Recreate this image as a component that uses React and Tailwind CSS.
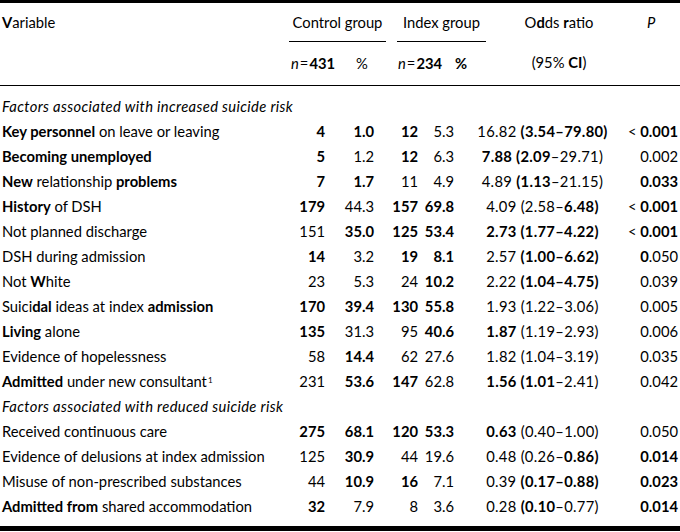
const rows = [
  { section: 'Factors associated with increased suicide risk' },
  { label: '*Key personnel* on leave or leaving', c: ['*4*', '*1.0*', '*12*', '5.3', '16.82 *(3.54–79.80)*', '< *0.001*'] },
  { label: '*Becoming unemployed*', c: ['*5*', '1.2', '*12*', '6.3', '*7.88 (2.09*–29.71)', '0.002'] },
  { label: '*New* relationship *problems*', c: ['*7*', '*1.7*', '11', '4.9', '4.89 *(1.13*–21.15)', '*0.033*'] },
  { label: '*History* of DSH', c: ['*179*', '44.3', '*157*', '*69.8*', '4.09 (2.58–*6.48)*', '< *0.001*'] },
  { label: 'Not planned discharge', c: ['151', '*35.0*', '*125*', '*53.4*', '*2.73 (1.77–4.22)*', '< *0.001*'] },
  { label: 'DSH during admission', c: ['*14*', '3.2', '*19*', '*8.1*', '2.57 *(1.00–6.62)*', '*0*.050'] },
  { label: 'Not *W*hite', c: ['23', '5.3', '24', '*10.2*', '2.22 *(1.04–4.75)*', '0.039'] },
  { label: 'Suici*dal* ideas at index *admission*', c: ['*170*', '*39.4*', '*130*', '*55.8*', '1.93 (1.22–3.06)', '0.005'] },
  { label: '*Living* alone', c: ['*135*', '31.3', '95', '*40.6*', '*1.87* (1.19–2.93)', '0.006'] },
  { label: 'Evidence of hopelessness', c: ['58', '*14.4*', '62', '27.6', '1.82 (1.04–3.19)', '0.035'] },
  { label: '*Admitted* under new consultant', sup: true, c: ['231', '*53.6*', '*147*', '62.8', '*1.56 (1.01*–2.41)', '0.042'] },
  { section: 'Factors associated with reduced suicide risk' },
  { label: 'Received continuous care', c: ['*275*', '*68.1*', '*120*', '*53.3*', '*0.63* (0.40–1.00)', '0.050'] },
  { label: 'Evidence of delusions at index admission', c: ['125', '*30.9*', '44', '19.6', '0.48 (0.26–*0.86)*', '*0.014*'] },
  { label: 'Misuse of non-prescribed substances', c: ['44', '*10.9*', '*16*', '7.1', '0.39 *(0.17–0.88)*', '*0.023*'] },
  { label: '*Admitted from* shared accommodation', c: ['*32*', '7.9', '8', '3.6', '0.28 *(0.10*–0.77)', '*0.014*'] },
]

// "*text*" marks the bold runs; wrapped in one span so spaces survive inside flex cells
function Rich({ text }) {
  return (
    <span>
      {text.split('*').map((part, i) =>
        i % 2 ? <b key={i} className="font-bold">{part}</b> : <span key={i}>{part}</span>
      )}
    </span>
  )
}

const cell = [
  'flex justify-end whitespace-nowrap',
  'flex justify-end whitespace-nowrap',
  'flex justify-end whitespace-nowrap',
  'flex justify-end whitespace-nowrap',
  'flex justify-center whitespace-nowrap tracking-[0.3px]',
  'flex justify-end whitespace-nowrap',
]

export default function App() {
  return (
    <div
      className="w-[680px] h-[532px] bg-white text-black text-[14.75px] overflow-hidden"
      style={{ fontFamily: 'Lato, "Open Sans", sans-serif' }}
    >
      <div className="h-[3px] bg-black" />

      {/* header */}
      <div className="flex border-b border-black">
        <div className="w-[289px] pl-[2px]">
          <div className="h-[38px] flex items-center"><span><b className="font-bold">V</b>ariable</span></div>
        </div>
        <div className="w-[197px]">
          <div className="flex h-[39px]">
            <div className="w-[97px] flex items-center justify-center border-b border-black">Control group</div>
            <div className="w-[11px]" />
            <div className="w-[89px] flex items-center justify-center border-b border-black">Index group</div>
          </div>
          <div className="flex h-[43px] items-center">
            <span className="w-[67px] pl-[2px]"><i>n</i><span className="mx-[1px]">=</span><b className="font-bold">431</b></span>
            <span className="w-[41px]">%</span>
            <span className="w-[58px] pl-[1px]"><i>n</i><span className="mx-[1px]">=</span><b className="font-bold">234</b></span>
            <b className="font-bold">%</b>
          </div>
        </div>
        <div className="w-[146px] flex flex-col items-center">
          <div className="h-[38px] flex items-center">
            <span>O<b className="font-bold">d</b>ds <b className="font-bold">r</b>atio</span>
          </div>
          <div className="h-[44px] flex items-center pb-[2px]">
            <span>(95% <b className="font-bold">CI</b>)</span>
          </div>
        </div>
        <div className="flex-1 pl-[15px]">
          <div className="h-[38px] flex items-center"><i>P</i></div>
        </div>
      </div>

      {/* body */}
      <div className="pt-[8px] pl-[2px]">
        {rows.map((r, i) =>
          r.section ? (
            <div key={i} className="h-[25px] flex items-center italic tracking-[0.35px]">{r.section}</div>
          ) : (
            <div key={i} className="h-[25px] grid grid-cols-[288px_35px_49px_44px_36px_177px_47px] items-center">
              <div className="whitespace-nowrap">
                <Rich text={r.label} />
                {r.sup && <sup className="text-[8px] ml-[1px]">1</sup>}
              </div>
              {r.c.map((v, j) => (
                <div key={j} className={cell[j]}><Rich text={v} /></div>
              ))}
            </div>
          )
        )}
      </div>

      <div className="mt-[7px] h-[5px] bg-black" />
    </div>
  )
}
